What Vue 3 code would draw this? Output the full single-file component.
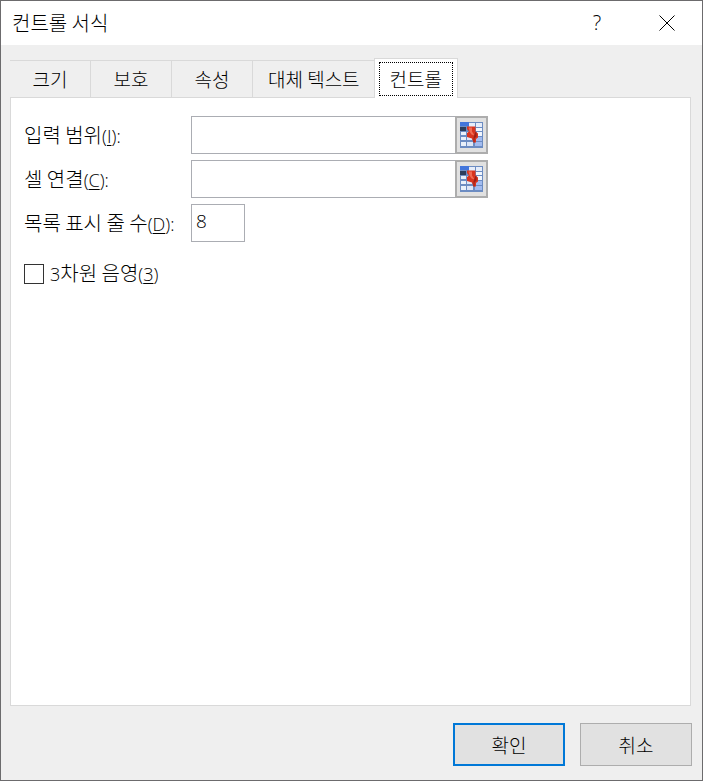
<template>
  <div class="dialog" role="dialog" aria-labelledby="dialog-title">
    <header class="title-bar">
      <h1 id="dialog-title">컨트롤 서식</h1>
      <div class="title-actions">
        <button type="button" class="title-btn" aria-label="도움말">?</button>
        <button type="button" class="title-btn" aria-label="닫기">
          <svg width="16" height="16" viewBox="0 0 16 16">
            <path d="M0.5 0.5 L15.5 15.5 M15.5 0.5 L0.5 15.5" fill="none" stroke="#000" stroke-width="1" />
          </svg>
        </button>
      </div>
    </header>

    <div class="tabs" role="tablist">
      <button
        v-for="tab in tabs"
        :key="tab"
        type="button"
        role="tab"
        class="tab"
        :class="{ active: tab === activeTab }"
        :aria-selected="tab === activeTab"
        @click="activeTab = tab"
      >
        <span class="tab-label">{{ tab }}</span>
      </button>
    </div>

    <main class="panel">
      <div v-for="field in rangeFields" :key="field.id" class="field">
        <label :for="field.id">{{ field.label }}<span class="key">(<u>{{ field.key }}</u>):</span></label>
        <div class="range-box">
          <input :id="field.id" v-model="field.value" type="text" />
          <button type="button" class="pick-btn" aria-label="범위 선택">
            <svg width="23" height="26" viewBox="0 0 23 26">
              <g shape-rendering="crispEdges">
                <rect width="23" height="26" fill="#6c8cc2" />
                <!-- header row -->
                <rect width="9" height="4" fill="#4376dc" />
                <path d="M9 1h6v4H9z M16 1h6v4h-6z" fill="#e6edfa" />
                <rect y="5" width="6" height="4" fill="#2c3d5c" />
                <!-- cells -->
                <path d="M1 10h5v3H1z M1 15h5v3H1z M1 20h5v4H1z" fill="#e9f0fa" />
                <path d="M7 10h3v3H7z M7 15h5v3H7z M7 20h6v4H7z" fill="#dde6f7" />
                <path d="M16 6h6v3h-6z M17 10h5v4h-5z" fill="#f2f6fd" />
                <path d="M16 15h6v4h-6z M15 20h7v4h-7z" fill="#a3bcf0" />
              </g>
              <!-- pin -->
              <path d="M7 4.5h8.500v5l2.500 2v4l-2 1.500v3.500h-2.500l-1.500-4-5-1.500v-4l2-1.500-2-2.500z" fill="#d8341f" />
              <path d="M8.500 5.500h3.500v4l2.500 4-3-1-2-3z" fill="#f16a54" />
              <path d="M15.500 9.500l1 2v3l-2 2v4h-1v-5l1-3z" fill="#9c2018" />
            </svg>
          </button>
        </div>
      </div>

      <div class="field">
        <label for="line-count">목록 표시 줄 수<span class="key">(<u>D</u>):</span></label>
        <input id="line-count" v-model="lineCount" class="count-input" type="text" />
      </div>

      <label class="check">
        <input v-model="shading" type="checkbox" />
        <span><span class="key">3</span>차원 음영<span class="key">(<u>3</u>)</span></span>
      </label>
    </main>

    <footer class="actions">
      <button type="button" class="btn btn-default">확인</button>
      <button type="button" class="btn">취소</button>
    </footer>
  </div>
</template>

<script setup>
import { ref } from 'vue';

const tabs = ['크기', '보호', '속성', '대체 텍스트', '컨트롤'];
const activeTab = ref('컨트롤');

const rangeFields = ref([
  { id: 'input-range', label: '입력 범위', key: 'I', value: '' },
  { id: 'cell-link', label: '셀 연결', key: 'C', value: '' }
]);
const lineCount = ref('8');
const shading = ref(false);
</script>

<style>
body {
  background-color: #efefef;
}
</style>

<style scoped>
.dialog,
.dialog * {
  box-sizing: border-box;
}

.dialog {
  display: flex;
  flex-direction: column;
  min-height: 100vh;
  border: 1px solid #6c6b6d;
  background-color: #efefef;
  color: #000;
  font-family: "Noto Sans CJK KR", sans-serif;
  font-size: 19px;
  font-weight: 300;
  line-height: 24px;
}

button,
input {
  margin: 0;
  color: inherit;
  font: inherit;
}

.title-bar {
  display: flex;
  align-items: center;
  justify-content: space-between;
  height: 44px;
  padding-left: 11px;
  background-color: #fff;
}

.title-bar h1 {
  margin: 0;
  font-size: 20px;
  font-weight: inherit;
}

.title-actions {
  display: flex;
  height: 100%;
}

.title-btn {
  display: flex;
  align-items: center;
  justify-content: center;
  width: 70px;
  padding: 0;
  border: none;
  background: none;
  font-family: "Open Sans", sans-serif;
  font-size: 20px;
}

.tabs {
  display: flex;
  align-items: flex-end;
  height: 52px;
  padding: 0 9px;
}

.tab {
  min-width: 81px;
  height: 37px;
  padding: 0 15px;
  border: solid #d9d9d9;
  border-width: 1px 1px 0 0;
  background-color: #efefef;
  white-space: nowrap;
}

.tab.active {
  z-index: 1;
  height: 40px;
  margin: 0 0 -1px -2px;
  padding: 0 4px;
  border-left-width: 1px;
  background-color: #fff;
}

.tab-label {
  display: block;
}

.tab.active .tab-label {
  padding: 4px 10px;
  border: 1px dotted #000;
}

.panel {
  flex: 1;
  margin: 0 11px 0 9px;
  padding: 18px 13px;
  border: 1px solid #d9d9d9;
  background-color: #fff;
}

.field {
  display: flex;
  align-items: center;
  margin-bottom: 6px;
}

.field label {
  width: 167px;
  white-space: nowrap;
}

.field label,
.check {
  font-size: 20px;
}

.key {
  font-family: "Open Sans", sans-serif;
  font-size: 18px;
}

.key u {
  text-underline-offset: 2px;
  text-decoration-thickness: 1px;
}

.range-box {
  display: flex;
  width: 297px;
  height: 38px;
}

.range-box input,
.count-input {
  border: 1px solid #abadb3;
  border-radius: 0;
  outline: none;
  background-color: #fff;
  font-family: "Open Sans", sans-serif;
}

.range-box input {
  flex: 1;
  min-width: 0;
  border-right: none;
}

.pick-btn {
  display: flex;
  align-items: center;
  justify-content: center;
  width: 33px;
  padding: 0;
  border: 2px solid #adadad;
  background-color: #e1e1e1;
}

.count-input {
  width: 54px;
  height: 38px;
  padding: 0 4px 4px;
}

.check {
  display: inline-flex;
  align-items: center;
  gap: 6px;
  margin-top: 13px;
}

.check input {
  appearance: none;
  width: 20px;
  height: 20px;
  border: 1px solid #333;
  background-color: #fff;
}

.check input:checked {
  background-color: #0078d7;
}

.actions {
  display: flex;
  justify-content: flex-end;
  gap: 15px;
  padding: 17px 10px 14px;
}

.btn {
  width: 112px;
  height: 43px;
  padding: 0;
  border: 1px solid #adadad;
  background-color: #e1e1e1;
}

.btn-default {
  border: 2px solid #0078d7;
}
</style>
